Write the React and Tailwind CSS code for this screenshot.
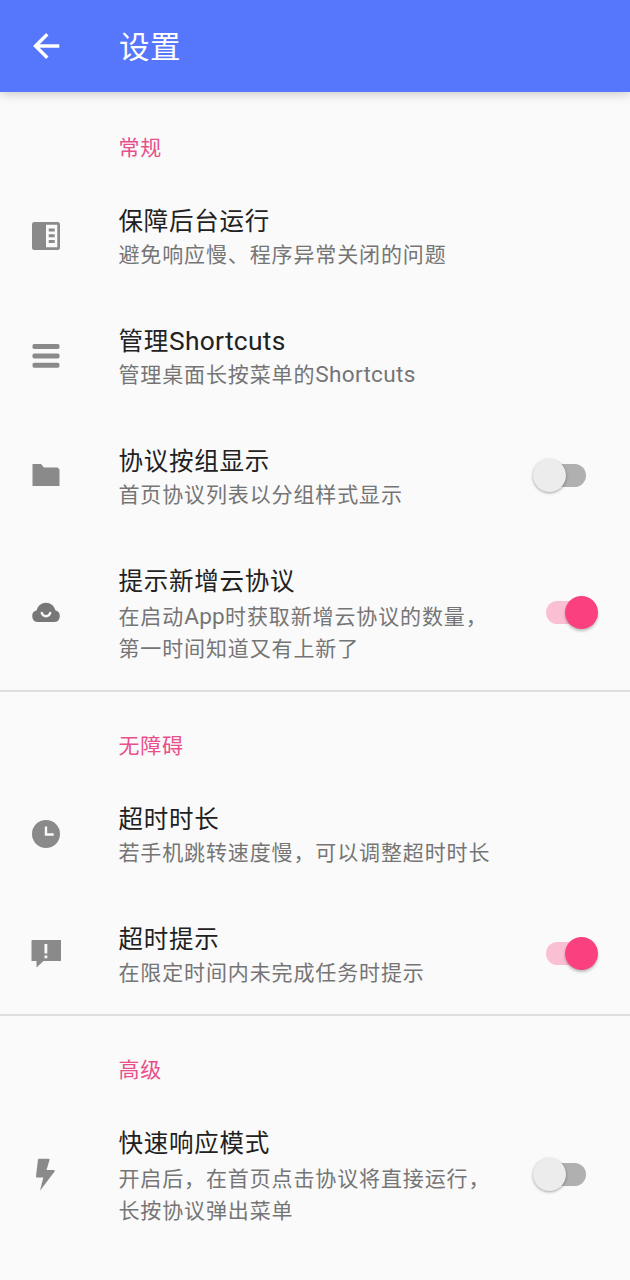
import React, { useState } from 'react';

const icons = {
  reader: (
    <svg width="30" height="30" viewBox="0 0 30 30" fill="#8a8a8a">
      <path fillRule="evenodd" d="M3.5 1h23A2.5 2.5 0 0 1 29 3.500v23a2.500 2.500 0 0 1-2.500 2.500h-23A2.500 2.500 0 0 1 1 26.500v-23A2.500 2.500 0 0 1 3.500 1zM15 3.700v22.600h11.300V3.700z" />
      <path d="M17.700 7.500h6v3h-6zM17.700 13.300h6v3h-6zM17.700 19.100h6v3h-6z" />
    </svg>
  ),
  menu: (
    <svg width="30" height="30" viewBox="0 0 30 30" fill="#8a8a8a">
      <rect x="1.500" y="3" width="27" height="5" rx="1.700" />
      <rect x="1.500" y="12.500" width="27" height="5" rx="1.700" />
      <rect x="1.500" y="21.800" width="27" height="5" rx="1.700" />
    </svg>
  ),
  folder: (
    <svg width="30" height="30" viewBox="0 0 30 30" fill="#8a8a8a">
      <path d="M1.500 3h8.500l3 3.500h13.500l2 2v16.500h-27z" />
    </svg>
  ),
  cloud: (
    <svg width="30" height="30" viewBox="0 0 30 30">
      <path fill="#777" d="M7 24a6 6 0 0 1-1.300-11.800C7 7.600 10.500 4.800 15 4.800s8 2.800 9.300 7.400A6 6 0 0 1 23 24z" />
      <path d="M10.800 15a4.400 4.600 0 0 0 8.400 0" fill="none" stroke="#fafafa" strokeWidth="2.400" strokeLinecap="round" />
    </svg>
  ),
  clock: (
    <svg width="30" height="30" viewBox="0 0 30 30">
      <circle cx="15" cy="15" r="14" fill="#8a8a8a" />
      <path d="M15 7.500v8h7.700" fill="none" stroke="#fafafa" strokeWidth="2.400" />
    </svg>
  ),
  alert: (
    <svg width="30" height="30" viewBox="0 0 30 30">
      <path fill="#8a8a8a" d="M1.500 1h28a.8.8 0 0 1 .8.800v20.200h-17.800L5.500 28.500v-6.500H.5V2a1 1 0 0 1 1-1z" />
      <path fill="#fafafa" d="M13.500 5h2.800v9.500h-2.800zM13.500 16.400h2.800v2.800h-2.800z" />
    </svg>
  ),
  bolt: (
    <svg width="30" height="34" viewBox="0 0 30 34" fill="#8a8a8a">
      <path d="M8 .8h9.500a1 1 0 0 1 1 1.300L15.500 12h7.300a.9.900 0 0 1 .8 1.400L9 32.800l3.300-13.300H6.200a1.200 1.200 0 0 1-1.200-1.500L7 1.600a1 1 0 0 1 1-.8z" />
    </svg>
  ),
};

const sections = [
  {
    title: '常规',
    items: [
      { icon: 'reader', title: '保障后台运行', lines: ['避免响应慢、程序异常关闭的问题'] },
      { icon: 'menu', title: '管理Shortcuts', lines: ['管理桌面长按菜单的Shortcuts'] },
      { icon: 'folder', title: '协议按组显示', lines: ['首页协议列表以分组样式显示'], checked: false },
      { icon: 'cloud', title: '提示新增云协议', lines: ['在启动App时获取新增云协议的数量，', '第一时间知道又有上新了'], checked: true },
    ],
  },
  {
    title: '无障碍',
    items: [
      { icon: 'clock', title: '超时时长', lines: ['若手机跳转速度慢，可以调整超时时长'] },
      { icon: 'alert', title: '超时提示', lines: ['在限定时间内未完成任务时提示'], checked: true },
    ],
  },
  {
    title: '高级',
    items: [
      { icon: 'bolt', title: '快速响应模式', lines: ['开启后，在首页点击协议将直接运行，', '长按协议弹出菜单'], checked: false },
    ],
  },
];

// Latin words are set slightly larger than the Chinese text around them
const MixedText = ({ text }) =>
  text.split(/([A-Za-z]+)/).map((part, i) =>
    i % 2 ? (
      <span key={i} className="text-[1.075em] leading-none tracking-[0.3px]">{part}</span>
    ) : (
      part
    )
  );

const Switch = ({ initial }) => {
  const [on, setOn] = useState(initial);

  return (
    <button
      role="switch"
      aria-checked={on}
      onClick={() => setOn(!on)}
      className={`mb-0.5 flex h-[34px] shrink-0 items-center ${on ? 'mr-8' : 'mr-11'}`}
    >
      {on ? (
        <>
          <span className="h-[23px] w-[35px] rounded-l-full bg-[#fbbfd4]" />
          <span className="-ml-4 size-[33px] rounded-full bg-[#fb4080] shadow-[0_2px_3px_rgba(0,0,0,0.25)]" />
        </>
      ) : (
        <>
          <span className="z-10 size-[33px] rounded-full bg-[#ececec] shadow-[0_1px_3px_rgba(0,0,0,0.35)]" />
          <span className="-ml-4 h-[23px] w-9 rounded-r-full bg-[#b0b0b0]" />
        </>
      )}
    </button>
  );
};

const SettingRow = ({ item }) => {
  const multi = item.lines.length > 1;

  return (
    <div className={`flex items-center ${multi ? 'h-[154px]' : 'h-[120px]'}`}>
      <div className="flex w-[118.500px] shrink-0 pl-[31px]">{icons[item.icon]}</div>
      <div className="flex-1 whitespace-nowrap pt-1">
        <p className="h-[34px] text-[24.5px] leading-[34px] tracking-[0.75px] text-[#212121]">
          <MixedText text={item.title} />
        </p>
        <div className={multi ? 'pt-0.5' : ''}>
          {item.lines.map((line) => (
            <p key={line} className="h-8 text-[21px] leading-8 tracking-[0.87px] text-[#757575]">
              <MixedText text={line} />
            </p>
          ))}
        </div>
      </div>
      {item.checked !== undefined && <Switch initial={item.checked} />}
    </div>
  );
};

const App = () => {
  return (
    <div className="h-[1280px] w-[630px] overflow-hidden bg-[#fafafa] font-[Roboto,'Noto_Sans_CJK_SC',sans-serif]">
      <header className="relative flex h-[92px] items-center bg-[#5677fc] pl-8 text-white shadow-[0_2px_10px_rgba(0,0,0,0.2)]">
        <svg width="28" height="28" viewBox="0 0 28 28" fill="none" stroke="currentColor" strokeWidth="3.400">
          <path d="M27.300 14H3.500M15.300 2.200L3.500 14l11.800 11.800" />
        </svg>
        <h1 className="ml-[59px] pt-1 text-[30.500px] leading-10 tracking-[0.5px]">设置</h1>
      </header>

      <main>
        {sections.map((section, i) => (
          <section key={section.title}>
            <div className={`h-[84px] pl-[118.500px] pt-10 ${i > 0 ? 'shadow-[inset_0_2px_0_#dedede]' : ''}`}>
              <h2 className="text-[21px] leading-8 tracking-[0.8px] text-[#e8508c]">{section.title}</h2>
            </div>
            {section.items.map((item) => (
              <SettingRow key={item.title} item={item} />
            ))}
          </section>
        ))}
      </main>
    </div>
  );
};

export default App;
